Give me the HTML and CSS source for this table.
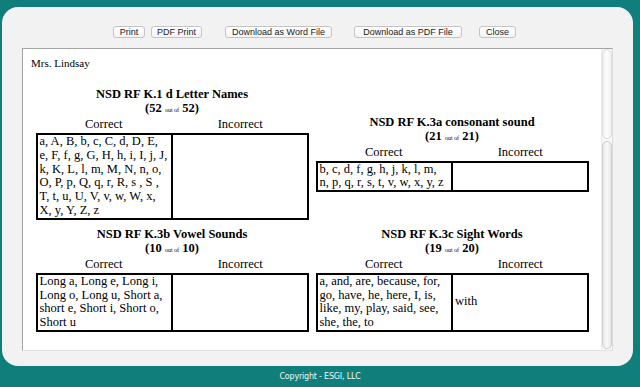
FILE: index.html
```html
<!DOCTYPE html>
<html>
<head>
<meta charset="utf-8">
<title>Report</title>
<link rel="stylesheet" href="styles.css">
</head>
<body>
<div class="panel">
  <div class="toolbar">
    <button class="btn b-print">Print</button>
    <button class="btn b-pdfprint">PDF Print</button>
    <button class="btn b-word">Download as Word File</button>
    <button class="btn b-pdf">Download as PDF File</button>
    <button class="btn b-close">Close</button>
  </div>
  <div class="frame">
    <div class="doc">
      <div class="teacher">Mrs. Lindsay</div>
      <div class="grid">
        <section class="block">
          <div class="title">NSD RF K.1 d Letter Names</div>
          <div class="score">(52 <span class="of">out of</span> 52)</div>
          <div class="heads"><span>Correct</span><span>Incorrect</span></div>
          <table class="tbl">
            <tr>
              <td>a, A, B, b, c, C, d, D, E,<br>e, F, f, g, G, H, h, i, I, j, J,<br>k, K, L, l, m, M, N, n, o,<br>O, P, p, Q, q, r, R, s , S ,<br>T, t, u, U, V, v, w, W, x,<br>X, y, Y, Z, z</td>
              <td></td>
            </tr>
          </table>
        </section>
        <section class="block">
          <div class="title">NSD RF K.3a consonant sound</div>
          <div class="score">(21 <span class="of">out of</span> 21)</div>
          <div class="heads"><span>Correct</span><span>Incorrect</span></div>
          <table class="tbl">
            <tr>
              <td>b, c, d, f, g, h, j, k, l, m,<br>n, p, q, r, s, t, v, w, x, y, z</td>
              <td></td>
            </tr>
          </table>
        </section>
        <section class="block">
          <div class="title">NSD RF K.3b Vowel Sounds</div>
          <div class="score">(10 <span class="of">out of</span> 10)</div>
          <div class="heads"><span>Correct</span><span>Incorrect</span></div>
          <table class="tbl">
            <tr>
              <td>Long a, Long e, Long i,<br>Long o, Long u, Short a,<br>short e, Short i, Short o,<br>Short u</td>
              <td></td>
            </tr>
          </table>
        </section>
        <section class="block">
          <div class="title">NSD RF K.3c Sight Words</div>
          <div class="score">(19 <span class="of">out of</span> 20)</div>
          <div class="heads"><span>Correct</span><span>Incorrect</span></div>
          <table class="tbl">
            <tr>
              <td>a, and, are, because, for,<br>go, have, he, here, I, is,<br>like, my, play, said, see,<br>she, the, to</td>
              <td>with</td>
            </tr>
          </table>
        </section>
      </div>
    </div>
    <div class="sb">
      <div class="sb-track"></div>
      <div class="sb-thumb"></div>
    </div>
  </div>
</div>
<div class="footer">Copyright - ESGI, LLC</div>
</body>
</html>
```

FILE: styles.css
```css
html, body {
  margin: 0;
  padding: 0;
}
body {
  background: #107f7b;
  width: 640px;
  height: 387px;
  overflow: hidden;
}
.panel {
  margin: 7px 0 0 2px;
  width: 631px;
  height: 359px;
  box-sizing: border-box;
  background: #f2f2f2;
  border-radius: 16px;
  padding-top: 19px;
}
.toolbar {
  display: flex;
  justify-content: center;
  padding-right: 6px;
  height: 12px;
}
.btn {
  box-sizing: border-box;
  height: 12px;
  margin: 0;
  padding: 0;
  border: 1px solid #c4c4c4;
  border-radius: 3px;
  background: linear-gradient(#ffffff, #f4f4f4);
  font-family: "Liberation Sans", Arial, sans-serif;
  font-size: 9px;
  line-height: 10px;
  color: #222;
  text-align: center;
}
.b-print { width: 32px; }
.b-pdfprint { width: 51px; margin-left: 6px; }
.b-word { width: 107px; margin-left: 23px; }
.b-pdf { width: 108px; margin-left: 22px; }
.b-close { width: 37px; margin-left: 17px; }

.frame {
  display: flex;
  box-sizing: border-box;
  width: 591px;
  height: 303px;
  margin: 10px 0 0 20px;
  border-style: solid;
  border-width: 1px;
  border-color: #a4a4a4 #dcdcdc #e2e2e2 #a4a4a4;
  background: #ffffff;
  overflow: hidden;
}
.doc {
  flex: 1;
  padding: 8px;
  overflow: hidden;
  font-family: "Liberation Serif", "Times New Roman", serif;
  color: #000;
}
.teacher {
  font-size: 11px;
  line-height: 12px;
}
.grid {
  display: grid;
  grid-template-columns: 273px 273px;
  column-gap: 7px;
  row-gap: 8px;
  justify-content: center;
  align-items: center;
  margin-top: 19px;
}
.title {
  font-size: 12.5px;
  font-weight: bold;
  line-height: 13px;
  text-align: center;
}
.score {
  font-size: 12.5px;
  font-weight: bold;
  line-height: 14px;
  text-align: center;
}
.of {
  font-size: 6px;
  font-weight: normal;
}
.heads {
  display: grid;
  grid-template-columns: 1fr 1fr;
  font-size: 12.5px;
  line-height: 14px;
  text-align: center;
  margin-bottom: 2px;
}
.tbl {
  width: 273px;
  table-layout: fixed;
  border-collapse: separate;
  border-spacing: 0;
  border: 1px solid #000;
}
.tbl td {
  width: 50%;
  border: 1px solid #000;
  padding: 0 1px 0 2px;
  font-size: 12.5px;
  line-height: 13.8px;
  vertical-align: middle;
  white-space: nowrap;
}
.sb {
  flex: none;
  width: 10px;
  display: flex;
  flex-direction: column;
  background: #f6f6f6;
  border-left: 1px solid #ececec;
  padding-bottom: 1px;
}
.sb-track {
  height: 90px;
  box-sizing: border-box;
  border: 1px solid #dedede;
  border-radius: 5px;
  background: linear-gradient(to right, #f0f0f0, #fdfdfd, #f0f0f0);
  margin-bottom: 2px;
}
.sb-thumb {
  flex: 1;
  box-sizing: border-box;
  border: 1px solid #cfcfcf;
  border-radius: 5px;
  background: linear-gradient(to right, #e6e6e6, #fafafa, #e6e6e6);
}
.footer {
  height: 21px;
  line-height: 21px;
  text-align: center;
  font-family: "DejaVu Sans", Verdana, sans-serif;
  font-size: 8px;
  letter-spacing: -0.2px;
  color: #eef6f6;
}
```
